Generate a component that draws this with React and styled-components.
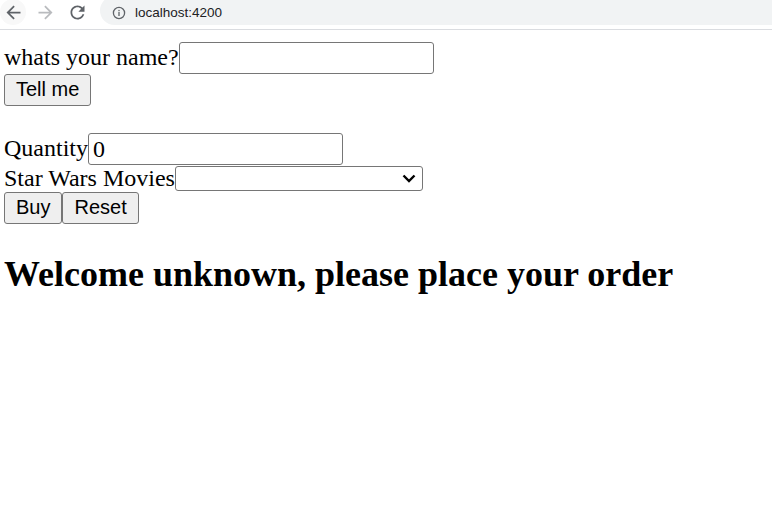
import React, { useState } from "react";
import styled, { createGlobalStyle } from "styled-components";

const GlobalStyle = createGlobalStyle`
  html, body {
    margin: 0;
    background: #ffffff;
  }
`;

function App() {
  const [name, setName] = useState("");
  const [quantity, setQuantity] = useState("0");
  const [movie, setMovie] = useState("");

  return (
    <>
      <GlobalStyle />
      <Toolbar>
        <NavButton hover>
          <svg width="21" height="21" viewBox="0 0 24 24">
            <path
              fill="#5f6368"
              d="M20 11H7.83l5.59-5.59L12 4l-8 8 8 8 1.41-1.41L7.83 13H20v-2z"
            />
          </svg>
        </NavButton>
        <NavButton>
          <svg width="21" height="21" viewBox="0 0 24 24">
            <path
              fill="#b9bbbe"
              d="M12 4l-1.41 1.41L16.17 11H4v2h12.17l-5.58 5.59L12 20l8-8z"
            />
          </svg>
        </NavButton>
        <NavButton>
          <svg width="21" height="21" viewBox="0 0 24 24">
            <path
              fill="#5f6368"
              d="M17.65 6.35C16.2 4.9 14.21 4 12 4c-4.42 0-7.99 3.58-7.99 8s3.57 8 7.99 8c3.73 0 6.84-2.55 7.73-6h-2.08c-.82 2.33-3.04 4-5.65 4-3.31 0-6-2.69-6-6s2.69-6 6-6c1.66 0 3.140.69 4.22 1.78L13 11h7V4l-2.35 2.35z"
            />
          </svg>
        </NavButton>
        <AddressBar>
          <svg width="14" height="14" viewBox="0 0 14 14">
            <circle cx="7" cy="7" r="5.6" fill="none" stroke="#5f6368" strokeWidth="1.3" />
            <rect x="6.35" y="6" width="1.3" height="4" fill="#5f6368" />
            <rect x="6.35" y="3.9" width="1.3" height="1.3" fill="#5f6368" />
          </svg>
          <Url>localhost:4200</Url>
        </AddressBar>
      </Toolbar>

      <Page>
        <Row>
          <Label>whats your name?</Label>
          <TextInput value={name} onChange={(e) => setName(e.target.value)} />
        </Row>
        <Row>
          <Button>Tell me</Button>
        </Row>
        <BlankLine />
        <Row>
          <Label>Quantity</Label>
          <TextInput
            value={quantity}
            onChange={(e) => setQuantity(e.target.value)}
          />
        </Row>
        <Row short>
          <Label>Star Wars Movies</Label>
          <SelectWrap>
            <Select value={movie} onChange={(e) => setMovie(e.target.value)}>
              <option value=""></option>
              <option value="4">A New Hope</option>
              <option value="5">The Empire Strikes Back</option>
              <option value="6">Return of the Jedi</option>
            </Select>
            <Chevron width="14" height="9" viewBox="0 0 14 9">
              <path
                d="M1.5 1.5 L7 7 L12.5 1.5"
                fill="none"
                stroke="#000"
                strokeWidth="2.4"
              />
            </Chevron>
          </SelectWrap>
        </Row>
        <Row>
          <Button>Buy</Button>
          <Button>Reset</Button>
        </Row>
        <Heading>Welcome unknown, please place your order</Heading>
      </Page>
    </>
  );
}

const Toolbar = styled.div`
  display: flex;
  align-items: flex-start;
  gap: 6px;
  height: 29px;
  border-bottom: 1px solid #dadce0;
  background: #ffffff;
  overflow: hidden;
`;

const NavButton = styled.div`
  display: flex;
  align-items: center;
  justify-content: center;
  width: 26px;
  height: 26px;
  margin-top: -1px;
  border-radius: 50%;
  background: ${(props) => (props.hover ? "#f8f8f8" : "transparent")};
`;

const AddressBar = styled.div`
  flex: 1;
  display: flex;
  align-items: center;
  gap: 9px;
  height: 29px;
  margin-top: -4px;
  margin-left: 4px;
  padding-left: 12px;
  padding-top: 4px;
  box-sizing: border-box;
  background: #f1f3f4;
  border-radius: 15px 0 0 15px;
`;

const Url = styled.span`
  font-family: "Liberation Sans", Arial, sans-serif;
  font-size: 13.5px;
  color: #202124;
`;

const Page = styled.div`
  display: flex;
  flex-direction: column;
  align-items: flex-start;
  padding: 12px 0 0 4px;
  font-family: "Liberation Serif", "Times New Roman", serif;
  font-size: 24px;
  color: #000000;
`;

const Row = styled.div`
  display: flex;
  align-items: center;
  height: ${(props) => (props.short ? "27px" : "auto")};
`;

const BlankLine = styled.div`
  height: 27.5px;
`;

const Label = styled.span`
  line-height: 28px;
  margin-top: -2px;
`;

const TextInput = styled.input`
  box-sizing: border-box;
  width: 255px;
  height: 32px;
  padding: 0 4px;
  border: 1px solid #767676;
  border-radius: 3px;
  font-family: "Liberation Serif", "Times New Roman", serif;
  font-size: 24px;
  color: #000000;
  background: #ffffff;
  outline: none;
`;

const SelectWrap = styled.div`
  position: relative;
  display: flex;
`;

const Select = styled.select`
  appearance: none;
  box-sizing: border-box;
  width: 248px;
  height: 25px;
  border: 1px solid #767676;
  border-radius: 3px;
  background: #ffffff;
  font-family: "Liberation Serif", "Times New Roman", serif;
  font-size: 20px;
  outline: none;
`;

const Chevron = styled.svg`
  position: absolute;
  right: 7px;
  top: 8px;
  pointer-events: none;
`;

const Button = styled.button`
  box-sizing: border-box;
  height: 31.5px;
  padding: 0 11px;
  border: 1px solid #767676;
  border-radius: 3px;
  background: #efefef;
  font-family: "Liberation Sans", Arial, sans-serif;
  font-size: 20px;
  color: #000000;
  cursor: pointer;
`;

const Heading = styled.h2`
  margin: 30px 0;
  font-size: 36px;
  font-weight: bold;
  line-height: 41px;
`;

export default App;
